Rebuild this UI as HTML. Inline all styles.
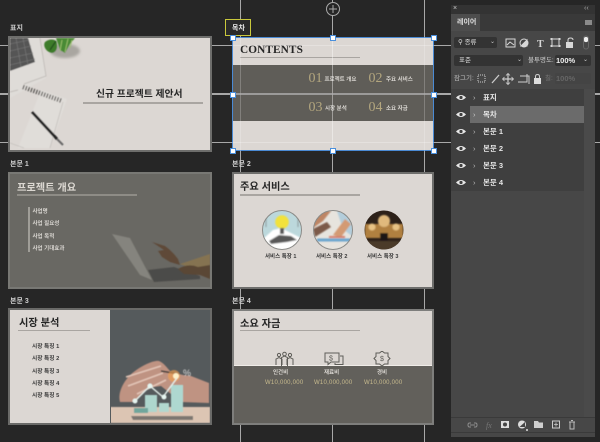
<!DOCTYPE html>
<html lang="ko"><head><meta charset="utf-8">
<style>
html,body{margin:0;padding:0;background:#262626}
#c{position:relative;width:600px;height:442px;overflow:hidden;background:#262626;font-family:"Liberation Sans","Noto Sans CJK KR",sans-serif;filter:blur(.3px)}
#c div,#c span{position:absolute;white-space:nowrap}
.g{background:#a8a8a8}
.s{box-sizing:border-box;border:2px solid #6e6e6c;background:#dcd7d3;overflow:hidden}
.lb{font-size:7px;color:#cfcfcf;line-height:9px;font-weight:bold}
.t{color:#262626;font-weight:bold;line-height:1}
.ln{background:#a9a5a1;height:1px}
.w{color:#d8d5d0;font-size:6px;font-weight:bold;line-height:8px}
.d{color:#3a3a3a;font-size:6px;font-weight:bold;line-height:8px}
.n{color:#b3a67e;font-family:"Liberation Serif",serif;font-size:14px;line-height:14px}
.y{color:#c8bb8e;font-size:6px;line-height:8px;letter-spacing:.25px}
.h{width:4px;height:4px;background:#fff;border:1px solid #4a8fdc}
.ly{left:0;width:134px;height:17px;color:#e6e6e6;font-size:7.5px;font-weight:bold;line-height:17px}
</style></head><body><div id="c">

<!-- guides -->
<div class="g" style="left:0;top:45px;width:600px;height:1px"></div>
<div class="g" style="left:0;top:93px;width:600px;height:2px"></div>
<div class="g" style="left:0;top:142px;width:600px;height:1px"></div>
<div class="g" style="left:240px;top:0;width:1px;height:442px"></div>
<div class="g" style="left:332px;top:0;width:1px;height:442px"></div>
<div class="g" style="left:424px;top:0;width:1px;height:442px"></div>
<svg style="position:absolute;left:325px;top:1px" width="16" height="16"><circle cx="8" cy="8" r="6.5" fill="#262626" stroke="#aaa" stroke-width="1"/><path d="M8 4v8M4 8h8" stroke="#aaa"/></svg>

<!-- slide 1 -->
<div class="lb" style="left:10px;top:24px">표지</div>
<div class="s" style="left:8px;top:36px;width:204px;height:116px">
<svg style="position:absolute;left:0;top:0" width="200" height="112" viewBox="0 0 200 112">
<defs><filter id="b"><feGaussianBlur stdDeviation=".5"/></filter><filter id="b2"><feGaussianBlur stdDeviation="1.4"/></filter></defs>
<g filter="url(#b)">
<path d="M0 0H29L36 40 0 60Z" fill="#dfdcd8"/>
<path d="M30 0L36 38 14 46M0 54L8 52" fill="none" stroke="#b9b5b1" stroke-width=".7"/>
<path d="M0 0H18L25 24 0 33Z" fill="#555"/>
<path d="M0 6L19 2M0 13L21 8M0 20L23 15M0 27L25 21M6 0L11 29M13 0L18 27" stroke="#7a7a7a" stroke-width=".6"/>
<path d="M8 110L31 52 57 61 40 110Z" fill="#e0ddd9"/>
<path d="M0 105L14 110M40 110L53 64" fill="none" stroke="#bcb8b4" stroke-width=".6"/>
<path d="M13 49L52 63" stroke="#4a4744" stroke-width="4.500" stroke-dasharray="1.100 1.700"/>
<path d="M22 74L47 101" stroke="#242424" stroke-width="2.800"/>
<path d="M47 101L53 107" stroke="#666" stroke-width="2"/>
<ellipse cx="55" cy="13" rx="15" ry="7" fill="#a9a6a0" filter="url(#b2)"/>
<path d="M35 4C40 0 47 1 47 6 48 12 44 17 39 14 35 12 33 7 35 4Z" fill="#3d7c2c"/>
<path d="M46 0H65L60 6 55 15 50 12Z" fill="#4a8a35"/>
<path d="M52 2L50 13M58 1L55 14M62 2L60 10" stroke="#9fc26f" stroke-width=".9"/>
<path d="M46 3L40 12" stroke="#244f1b" stroke-width="1.300"/>
</g></svg>
<div class="t" style="left:86px;top:52px;font-size:9.8px">신규 프로젝트 제안서</div>
<div class="ln" style="left:73px;top:64px;width:120px;height:1.5px"></div>
</div>

<!-- slide 2 selected -->
<div style="left:225px;top:19px;width:26px;height:17px;box-sizing:border-box;border:1.5px solid #c9c83c;background:#2a2a2a"></div>
<div class="lb" style="left:232px;top:24px;color:#e8e8e8">목차</div>
<div class="s" style="left:232px;top:37px;width:202px;height:114px;border:1.5px solid #4a8ad4;background:#dcd7d3">
<div style="left:0;top:27px;width:200px;height:56px;background:#5f5d58"></div>
<div style="left:7px;top:5px;font:bold 11.3px 'Liberation Serif',serif;color:#262626;line-height:14px;letter-spacing:.1px">CONTENTS</div>
<div class="ln" style="left:7px;top:19px;width:120px"></div>
<div class="n" style="left:75.500px;top:34px">01</div><div class="w" style="left:91.5px;top:38px;font-size:5.5px">프로젝트 개요</div>
<div class="n" style="left:135.500px;top:34px">02</div><div class="w" style="left:153px;top:38px;font-size:5.5px">주요 서비스</div>
<div class="n" style="left:75.500px;top:63px">03</div><div class="w" style="left:92px;top:67px;font-size:5.5px">시장 분석</div>
<div class="n" style="left:135.500px;top:63px">04</div><div class="w" style="left:153px;top:67px;font-size:5.5px">소요 자금</div>
</div>
<div style="left:240px;top:37px;width:1px;height:114px;background:rgba(255,255,255,.22)"></div>
<div style="left:332px;top:37px;width:1px;height:114px;background:rgba(255,255,255,.4)"></div>
<div style="left:424px;top:37px;width:1px;height:114px;background:rgba(255,255,255,.22)"></div>
<div style="left:232px;top:45px;width:202px;height:1px;background:rgba(255,255,255,.25)"></div>
<div style="left:232px;top:93px;width:202px;height:2px;background:rgba(175,175,175,.75)"></div>
<div style="left:232px;top:142px;width:202px;height:1px;background:rgba(255,255,255,.25)"></div>
<div class="h" style="left:230px;top:35px"></div><div class="h" style="left:330px;top:35px"></div><div class="h" style="left:431px;top:35px"></div>
<div class="h" style="left:230px;top:92px"></div><div class="h" style="left:431px;top:92px"></div>
<div class="h" style="left:230px;top:148px"></div><div class="h" style="left:330px;top:148px"></div><div class="h" style="left:431px;top:148px"></div>

<!-- slide 3 -->
<div class="lb" style="left:10px;top:160px">본문 1</div>
<div class="s" style="left:8px;top:172px;width:204px;height:117px;background:#696863;border-color:#787874">
<div style="left:7px;top:7px;font-size:10.2px;font-weight:bold;color:#dcd8d2;line-height:16px">프로젝트 개요</div>
<div style="left:7px;top:20px;width:120px;height:2px;background:#8e8c86"></div>
<div style="left:17.5px;top:33px;width:2.5px;height:45px;background:#a09e98"></div>
<div class="w" style="left:22.5px;top:34px;font-size:5.5px">사업명</div>
<div class="w" style="left:22.5px;top:46px;font-size:5.5px">사업 필요성</div>
<div class="w" style="left:22.5px;top:59px;font-size:5.5px">사업 목적</div>
<div class="w" style="left:22.5px;top:71px;font-size:5.5px">사업 기대효과</div>
<svg style="position:absolute;left:100px;top:55px" width="100" height="60" viewBox="0 0 100 60"><g filter="url(#b)">
<path d="M2 5L20 9 42 51 30 46Z" fill="#85847e"/>
<path d="M38 41L64 38 90 47 90 50 44 53Z" fill="#4c4b48"/>
<path d="M70 35L100 25V50L90 42Z" fill="#857351"/>
<path d="M42 13L55 17Q62 22 68 30L70 36 60 33 52 28 48 22 54 21Z" fill="#5e4a39"/>
<path d="M68 40Q78 34 88 38L100 36V50L90 46 74 45Z" fill="#5a4636"/>
</g></svg>
</div>

<!-- slide 4 -->
<div class="lb" style="left:232px;top:160px">본문 2</div>
<div class="s" style="left:232px;top:172px;width:202px;height:117px">
<div class="t" style="left:6px;top:9px;font-size:10.2px">주요 서비스</div>
<div class="ln" style="left:6px;top:20px;width:120px;height:1.5px"></div>
<svg style="position:absolute;left:26.5px;top:35px" width="144" height="42" viewBox="0 0 144 42">
<defs>
<clipPath id="a"><circle cx="21" cy="21" r="19.5"/></clipPath>
<clipPath id="a2"><circle cx="72" cy="21" r="19.5"/></clipPath>
<clipPath id="a3"><circle cx="123" cy="21" r="19.5"/></clipPath>
<filter id="b3"><feGaussianBlur stdDeviation=".7"/></filter></defs>
<g clip-path="url(#a)"><rect width="42" height="42" fill="#bcd8dc"/><g filter="url(#b3)"><path d="M2 30L12 21 20 19 30 24 42 30V42H0Z" fill="#fff"/><circle cx="21" cy="13" r="6.8" fill="#f2e23a"/><path d="M19 19h4v6h-4z" fill="#555"/><path d="M8 32L18 26 30 27 36 31 26 33 10 35Z" fill="#595959"/><path d="M5 8v10M37 8v10" stroke="#8a9698"/></g></g>
<circle cx="21" cy="21" r="19.5" fill="none" stroke="#8b8b88" stroke-width="1"/>
<g clip-path="url(#a2)"><rect x="50" width="44" height="42" fill="#e7e4de"/><g filter="url(#b3)"><path d="M52 2H70L62 12 52 19Z" fill="#bd8565"/><path d="M52 20L66 13 70 18 54 28Z" fill="#7c5a48"/><path d="M76 2H92V28L82 20Z" fill="#b3cddb"/><path d="M72 26L84 10 90 15 80 28Z" fill="#d39a73"/><path d="M56 31H90" stroke="#6aa5cf" stroke-width="3"/><path d="M68 28H84" stroke="#d57f6c" stroke-width="2"/></g></g>
<circle cx="72" cy="21" r="19.5" fill="none" stroke="#8b8b88" stroke-width="1"/>
<g clip-path="url(#a3)"><rect x="102" width="42" height="42" fill="#2d2119"/><g filter="url(#b3)"><rect x="104" y="15" width="38" height="14" fill="#b0803f"/><circle cx="123" cy="12" r="6" fill="#e0b97c"/><circle cx="111" cy="18" r="3.5" fill="#e8c384"/><circle cx="135" cy="18" r="3.5" fill="#e8c384"/><rect x="119" y="24" width="8" height="12" fill="#1d1712"/><rect x="104" y="32" width="38" height="10" fill="#4b3a2a"/></g></g>
</svg>
<div class="d" style="left:31px;top:79px;font-size:5.5px">서비스 특장 1</div>
<div class="d" style="left:82px;top:79px;font-size:5.5px">서비스 특장 2</div>
<div class="d" style="left:133px;top:79px;font-size:5.5px">서비스 특장 3</div>
</div>

<!-- slide 5 -->
<div class="lb" style="left:10px;top:297px">본문 3</div>
<div class="s" style="left:8px;top:308px;width:204px;height:117px;border-color:#6a6a68">
<div style="left:100px;top:0;width:100px;height:113px;background:#555a5c"></div>
<svg style="position:absolute;left:101px;top:0" width="99" height="113" viewBox="0 0 99 113"><g filter="url(#b)">
<path d="M-1 97H99V113H-1Z" fill="#dcc5b3"/>
<path d="M9 92C6 82 14 68 24 61 32 55 43 50 48 51 53 53 56 58 60 62L72 65 80 66 98 73V93L70 92 50 76 36 78 24 92Z" fill="#bf9382"/>
<path d="M15 67L50 56M17 76L52 63M26 84L55 70" stroke="#e2c4b6" stroke-width="1.600"/>
<path d="M50 61L68 64" stroke="#3c3a38" stroke-width="1.500"/>
<circle cx="63" cy="66" r="6" fill="#f0a04f" opacity=".65"/><circle cx="65" cy="66" r="3" fill="#fff1c8"/>
<text x="72" y="66" font-family="Liberation Sans" font-size="9" fill="#ddd">%</text>
<rect x="34" y="85" width="12" height="17" fill="#aed6cd"/><rect x="48" y="93" width="10" height="9" fill="#b2d8cf"/><rect x="60" y="75" width="12" height="27" fill="#aed8d0"/>
<rect x="23" y="98" width="14" height="5" fill="#6fa69c"/><path d="M20 106H82V110H22Z" fill="#7d7771"/>
<path d="M24 91L39 76 52 87 66 68" stroke="#e4efea" stroke-width="1.400" fill="none"/>
<circle cx="24" cy="91" r="2.500" fill="#e6f5f0"/><circle cx="39" cy="76" r="2.500" fill="#e6f5f0"/><circle cx="53" cy="87" r="2.500" fill="#e6f5f0"/>
</g></svg>
<div class="t" style="left:9px;top:9px;font-size:10.2px">시장 분석</div>
<div class="ln" style="left:8px;top:19.500px;width:72px;height:1.5px"></div>
<div class="d" style="left:22px;top:33px;font-size:5.7px">시장 특징 1</div>
<div class="d" style="left:22px;top:45px;font-size:5.7px">시장 특징 2</div>
<div class="d" style="left:22px;top:58px;font-size:5.7px">시장 특징 3</div>
<div class="d" style="left:22px;top:70px;font-size:5.7px">시장 특징 4</div>
<div class="d" style="left:22px;top:82px;font-size:5.7px">시장 특징 5</div>
</div>

<!-- slide 6 -->
<div class="lb" style="left:232px;top:297px">본문 4</div>
<div class="s" style="left:232px;top:309px;width:202px;height:116px;border-color:#7e7e7c">
<div style="left:0;top:55px;width:198px;height:57px;background:#62605b"></div>
<div style="left:0;top:54px;width:198px;height:1px;background:#f0ece8"></div>
<div class="t" style="left:6px;top:8.500px;font-size:10.2px">소요 자금</div>
<div class="ln" style="left:6px;top:18.5px;width:120px;height:1.5px"></div>
<svg style="position:absolute;left:40px;top:40px" width="120" height="16" viewBox="0 0 120 16" fill="none" stroke="#5e5d58" stroke-width="1">
<circle cx="5" cy="4" r="1.6"/><circle cx="10.500" cy="3" r="1.800"/><circle cx="16" cy="4" r="1.600"/>
<path d="M2 14V8L5 6.500 8 8V14M7.500 15V6.500L10.500 5 13.500 6.500V15M13 14V8L16 6.500 19 8V14"/>
<path d="M51 2H65V11H57L54 13.500V11H51Z"/><path d="M66 5H69V13.500H61V12"/><text x="55" y="9.500" font-size="7" fill="#5e5d58" stroke="none" font-family="Liberation Sans">$</text>
<path d="M108 0L110.500 2H114V5.500L116 7.500 114 9.500V13H110.500L108 15 105.500 13H102V9.500L100 7.500 102 5.500V2H105.500Z"/><text x="106" y="10" font-size="7" fill="#5e5d58" stroke="none" font-family="Liberation Sans">$</text>
</svg>
<div class="w" style="left:39px;top:58px;font-size:5.5px">인건비</div>
<div class="w" style="left:90px;top:58px;font-size:5.5px">재료비</div>
<div class="w" style="left:143px;top:58px;font-size:5.5px">경비</div>
<div class="y" style="left:31px;top:68px">W10,000,000</div>
<div class="y" style="left:80px;top:68px">W10,000,000</div>
<div class="y" style="left:130px;top:68px">W10,000,000</div>
</div>

<!-- layers panel -->
<div style="left:451px;top:5px;width:144px;height:432px;background:#474747">
<div style="left:0;top:0;width:144px;height:9px;background:#333"></div>
<div style="left:2px;top:0;font-size:7px;color:#ccc;line-height:8px">×</div>
<div style="left:133px;top:0;font-size:7px;color:#aaa;line-height:8px">‹‹</div>
<div style="left:0;top:9px;width:144px;height:17px;background:#393939"></div>
<div style="left:0;top:9px;width:29px;height:17px;background:#4d4d4d"></div>
<div style="left:6px;top:13px;font-size:7px;color:#ddd;line-height:9px;font-weight:bold">레이어</div>
<div style="left:134px;top:15px;width:7px;height:5px;background:#8a8a8a"></div>

<div style="left:3px;top:32px;width:43px;height:11px;background:#333;border-radius:2px"></div>
<div style="left:7px;top:33px;font-size:6.5px;color:#ddd;line-height:9px">⚲ 종류</div>
<div style="left:39px;top:33px;font-size:6px;color:#ccc;line-height:9px">⌄</div>
<svg style="position:absolute;left:54px;top:30px" width="86" height="16" viewBox="0 0 86 16" fill="none" stroke="#d8d8d8" stroke-width="1">
<rect x="1" y="4" width="9" height="8"/><path d="M2 10L5 7 9 10" />
<circle cx="19" cy="8" r="4" /><path d="M16 11L22 5V11Z" fill="#d8d8d8"/>
<text x="32" y="12" font-size="10" font-weight="bold" fill="#d8d8d8" stroke="none" font-family="Liberation Serif">T</text>
<rect x="47" y="4" width="7" height="7"/><path d="M45.500 3h2v2h-2zM53.500 3h2v2h-2zM45.500 10h2v2h-2zM53.500 10h2v2h-2z" fill="#d8d8d8" stroke="none"/>
<rect x="61" y="7" width="7" height="6" fill="#d8d8d8" stroke="none"/><path d="M63 7V5Q63 3 65.500 3 68 3 68 5"/>
<circle cx="81" cy="4.500" r="2.600" fill="#eee" stroke="none"/><rect x="78.500" y="1" width="5" height="13" rx="2.500" stroke="#666"/>
</svg>

<div style="left:3px;top:50px;width:69px;height:11px;background:#333;border-radius:2px"></div>
<div style="left:8px;top:51px;font-size:6.5px;color:#ddd;line-height:9px">표준</div>
<div style="left:66px;top:51px;font-size:6px;color:#ccc;line-height:9px">⌄</div>
<div style="left:77px;top:51px;font-size:6.5px;color:#ccc;line-height:9px">불투명도:</div>
<div style="left:104px;top:50px;width:36px;height:11px;background:#333;border-radius:2px"></div>
<div style="left:105px;top:51px;font-size:7.5px;color:#eee;line-height:9px;font-weight:bold">100%</div>
<div style="left:132px;top:51px;font-size:6px;color:#ccc;line-height:9px">⌄</div>

<div style="left:3px;top:69px;font-size:6.5px;color:#bbb;line-height:9px">잠그기:</div>
<svg style="position:absolute;left:26px;top:67px" width="76" height="14" viewBox="0 0 76 14" fill="none" stroke="#ccc">
<rect x="1" y="3" width="7" height="7" stroke-dasharray="1 1"/>
<path d="M15 11L22 3" stroke-width="1.300"/>
<path d="M31 2V12M26 7H36" stroke-width="1.200"/><path d="M29 3.500L31 1.500 33 3.500M29 10.500L31 12.500 33 10.500M27.500 5L25.500 7 27.500 9M34.500 5L36.500 7 34.500 9" stroke-width=".8"/>
<path d="M43 4H52V12M50 2V10H41" stroke-width="1"/>
<rect x="57" y="6" width="7" height="6" fill="#ddd" stroke="none"/><path d="M58.500 6V4.500Q58.500 2.500 60.500 2.500 62.500 2.500 62.500 4.500V6"/>
</svg>
<div style="left:94px;top:69px;font-size:6.5px;color:#777;line-height:9px">칠:</div>
<div style="left:104px;top:68px;width:36px;height:11px;background:#444;border-radius:2px"></div>
<div style="left:105px;top:69px;font-size:7.5px;color:#666;line-height:9px;font-weight:bold">100%</div>

<div style="left:0;top:84px;width:133px;height:102px;background:#3f3f3f"></div>
<div style="left:133px;top:84px;width:11px;height:328px;background:#4a4a4a"></div>
<div style="left:19px;top:101px;width:114px;height:17px;background:#6b6b6b"></div>
<div class="ly" style="top:84px"><span style="left:32px">표지</span><span style="left:22px;font-weight:normal;color:#bbb">›</span></div>
<div class="ly" style="top:101px"><span style="left:32px">목차</span><span style="left:22px;font-weight:normal;color:#ccc">›</span></div>
<div class="ly" style="top:118px"><span style="left:32px">본문 1</span><span style="left:22px;font-weight:normal;color:#bbb">›</span></div>
<div class="ly" style="top:135px"><span style="left:32px">본문 2</span><span style="left:22px;font-weight:normal;color:#bbb">›</span></div>
<div class="ly" style="top:152px"><span style="left:32px">본문 3</span><span style="left:22px;font-weight:normal;color:#bbb">›</span></div>
<div class="ly" style="top:169px"><span style="left:32px">본문 4</span><span style="left:22px;font-weight:normal;color:#bbb">›</span></div>
<svg style="position:absolute;left:3.5px;top:84px" width="12" height="102" viewBox="0 0 12 102" fill="#e8e8e8">
<g id="e"><path d="M1 8.500Q6 3.500 11 8.500 6 13.500 1 8.500Z"/><circle cx="6" cy="8.500" r="1.600" fill="#3f3f3f"/></g>
<use href="#e" y="17"/><use href="#e" y="34"/><use href="#e" y="51"/><use href="#e" y="68"/><use href="#e" y="85"/>
</svg>

<div style="left:0;top:412px;width:144px;height:1px;background:#3a3a3a"></div>
<div style="left:0;top:427px;width:144px;height:1px;background:#3a3a3a"></div>
<svg style="position:absolute;left:16px;top:411.5px" width="112" height="16" viewBox="0 0 112 16" fill="none" stroke="#8e8e8e">
<path d="M4 6H2.500Q1 6 1 8 1 10 2.500 10H4M7 6H8.500Q10 6 10 8 10 10 8.500 10H7M3 8H8" />
<text x="19" y="11" font-size="8" font-style="italic" fill="#777" stroke="none" font-family="Liberation Serif">fx</text>
<rect x="34" y="4" width="8" height="7" fill="#ddd" stroke="none"/><circle cx="38" cy="7.500" r="2" fill="#444" stroke="none"/>
<circle cx="55" cy="7.500" r="4" fill="#ddd" stroke="none"/><path d="M52.500 10L58 5V10Z" fill="#444" stroke="none"/><circle cx="60" cy="13" r="1" fill="#ddd" stroke="none"/>
<path d="M67 11V4H71L72 5.500H76V11Z" fill="#cfcfcf" stroke="none"/>
<rect x="85.500" y="4" width="7" height="7" stroke="#ccc"/><path d="M87 7.500H91M89 5.500V9.500" stroke="#ccc" stroke-width=".8"/>
<path d="M102 5H108M103 5V12H107V5M104 3.500H106" stroke="#bbb"/>
</svg>
</div>
</div></body></html>
